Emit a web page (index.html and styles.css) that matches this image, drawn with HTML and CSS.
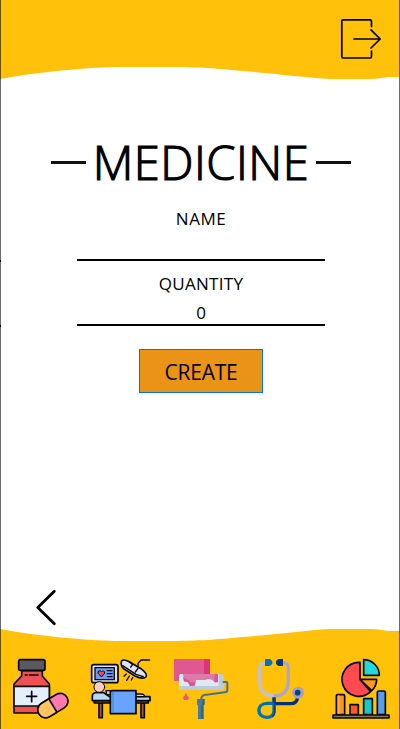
FILE: index.html
```html
<!DOCTYPE html>
<html lang="en">
<head>
<meta charset="utf-8">
<title>Medicine</title>
<link rel="stylesheet" href="styles.css">
</head>
<body>
<div class="app">
  <header class="header">
    <svg class="wave" viewBox="0 0 400 84"><path d="M0 0H400V77H388C380 78.7 372 79 362 79H330C306 77.5 270 73 243 71C222 69 205 67.3 172 67H115C80 68 38 72 0 79Z"/></svg>
    <a class="logout" aria-label="Log out"><svg viewBox="0 0 42 42"><path d="M31.5 7.5V2.2Q31.5 .8 30 .8H3.3Q1.8 .8 1.8 2.3V37.5Q1.8 39 3.3 39H30Q31.5 39 31.5 37.5V32M14 20H40M31 10.8L40.2 20L31 29"/></svg></a>
  </header>
  <main class="form">
    <h1 class="title"><span class="dash"></span><span class="title-text">MEDICINE</span><span class="dash"></span></h1>
    <label class="label name-label">NAME</label>
    <div class="field"></div>
    <label class="label quantity-label">QUANTITY</label>
    <div class="field quantity">0</div>
    <button class="create">CREATE</button>
  </main>
  <div class="back-row"><svg class="back" viewBox="0 0 22 38"><path d="M19.3 2.2L2.8 18.5L19.3 34.8"/></svg></div>
  <footer class="footer">
    <svg class="wave" viewBox="0 0 400 105"><path d="M0 5C38 12 80 16 115 17H172C205 16.7 222 15 243 13C270 11 306 6.5 330 5H362C372 5 380 5.3 388 7H400V105H0Z"/></svg>
    <nav class="nav">
      <svg viewBox="0 0 240 237">
        <g class="outlined">
          <path fill="#ee5054" d="M65 62H127V78L148 102V189H42V102L65 78Z"/>
          <rect x="56" y="29" width="79" height="32" rx="5" fill="#5a5a5e"/>
          <path fill="#e3effd" d="M42 109H148V168H42Z"/>
          <path d="M80 139H110M95 124V155M76 75H81M88 75H114"/>
          <g transform="rotate(-31 159 167)"><rect x="110" y="143" width="98" height="47" rx="23.5" fill="#ff79b0"/><path fill="#ffc360" d="M159 143H133.5A23.5 23.5 0 0 0 133.5 190H159Z"/></g>
        </g>
      </svg>
      <svg viewBox="0 0 240 237">
        <g class="outlined">
          <rect x="35" y="44" width="79" height="54" rx="6" fill="#dfdff1"/>
          <rect x="45" y="53" width="58" height="36" fill="#68a0f8" stroke-width="4"/>
          <path fill="#ff4b59" stroke-width="3" d="M64 80L54 70Q53 61 60 62L64 65Q73 59 74 68Z"/>
          <path stroke-width="4" d="M82 62H96M82 71H96M82 80H96"/>
          <path fill="#dfe3f8" d="M125 32Q132 27 148 35L183 56Q204 72 198 80Q190 90 165 78L132 57Q120 46 125 32Z"/>
          <path stroke-width="4" d="M128 47L168 73L190 80M148 36L158 44L152 51M174 55L166 66"/>
          <path stroke-width="4" d="M174 49V40L183 30H209M139 72L132 79M148 78L140 91M158 83L154 90"/>
          <path fill="#a85b49" stroke-width="5" d="M57 158H67V203H57ZM183 158H193V203H183Z"/>
          <path fill="#a85b49" d="M43 151H205V159H43Z"/>
          <path fill="#b7d8f6" d="M37 139Q36 131 45 128H71L88 140H210V152H37Z"/>
          <path fill="#ffc9b9" d="M78 122H106V134H80ZM162 132H184Q194 132 193 140H162Z" stroke-width="4"/>
          <circle cx="58" cy="111" r="16" fill="#ffcebf" stroke-width="3"/>
          <path fill="#68a3ff" d="M91 126Q91 122 96 122H168V191H91Z"/>
          <path stroke="#4389e3" d="M99 127V187" stroke-width="4"/>
        </g>
      </svg>
      <svg viewBox="0 0 240 237">
        <path fill="#df5892" d="M42 27H132V93H42Z"/><path fill="#dc3479" d="M132 27H150V76H132Z"/>
        <path fill="#dfe8ef" d="M60 72H186L190 78V116L186 120H60L57 115V77Z"/>
        <path fill="#b9cbdc" d="M57 108H176V72H186L190 78V116L186 120H60L57 115Z"/>
        <path fill="#df79aa" d="M69 72H174V96Q165 101 160 92L151 88H139V90H108L105 108H90L84 97L72 94Z"/>
        <path fill="#dc5591" d="M69 82L86 90L90 97H106L102 108H90L84 97L72 94ZM164 72H174V96H162Z"/>
        <path fill="none" stroke="#42729a" stroke-width="6" d="M188 96H199Q202 96 202 100V121Q202 126 195 127L133 135Q124 137 123 150"/>
        <path fill="#336387" d="M112 147H134V164H131V207H114V164H112Z"/><path fill="#477a9f" d="M112 147H127V164H123V207H114V164H112Z"/>
        <path fill="#df5892" d="M78 128L82 137L87 142L84 150H72L69 142L75 136Z"/>
      </svg>
      <svg viewBox="0 0 240 237">
        <g class="tube">
          <path stroke="#c4bfd2" d="M76 38Q59 39 59 55V93Q59 137 102 138"/>
          <path stroke="#aaa6c9" d="M128 38Q145 39 145 55V93Q145 137 102 138"/>
          <path stroke="#00317c" d="M102 142V161H154Q172 160 173 140"/>
          <path stroke="#0073ae" d="M101 160H82C48 160 49 202 80 202Q101 202 102 184V160"/>
          <path stroke="#00418a" d="M104 145V186Q104 195 97 200" stroke-width="5"/>
        </g>
        <path fill="#0075ad" d="M75 27H90L97 34V41L90 48H75Z"/><path fill="#003582" d="M129 27H115L108 34V41L115 48H129Z"/>
        <circle cx="174" cy="128" r="18" fill="#aaa0b7"/><circle cx="173" cy="128" r="8.5" fill="#00418a"/>
      </svg>
      <svg viewBox="0 0 240 237">
        <g class="outlined">
          <path fill="#ff4b50" d="M120 88L152 125A51 51 0 1 1 120 37Z"/>
          <path fill="#24d6de" d="M131 29A47 47 0 0 1 178 76H131Z"/>
          <path fill="#ff981e" d="M120 88H170Q170 109 155 122Z"/>
          <path fill="#ff941f" d="M49 194V138Q49 134 53 134H70Q74 134 74 138V194Z"/>
          <path stroke="#ffb241" d="M56 138V190"/>
          <path fill="#fa572b" d="M90 194V164H115V194Z"/>
          <path fill="#15c8d2" d="M131 194V146H157V194Z"/>
          <path fill="#579cf0" d="M172 194V127Q172 123 176 123H192Q196 123 196 127V194Z"/>
          <rect x="39" y="195" width="168" height="9" fill="#85736b"/>
        </g>
      </svg>
    </nav>
  </footer>
</div>
</body>
</html>
```
FILE: styles.css
```css
* { box-sizing: border-box; }
body { margin: 0; background: #fff; color: #000; font-family: "Open Sans", "Noto Sans", sans-serif; }
.app { position: relative; width: 400px; height: 729px; display: flex; flex-direction: column; overflow: hidden; }
.app::after { content: ""; position: absolute; inset: 0; border: solid rgba(0, 0, 0, .58); border-width: 0 1px; pointer-events: none; }
/* Small ticks on the window edge, level with the field underlines */
.app::before { content: ""; position: absolute; left: 0; top: 260px; width: 1px; height: 63px; border: solid #000; border-width: 2px 0; }
.header { position: relative; height: 84px; }
.wave { display: block; width: 100%; fill: #ffc10a; }
.logout { position: absolute; top: 19px; right: 18px; width: 42px; height: 42px; }
.logout svg { display: block; fill: none; stroke: #000; stroke-width: 1.7; stroke-linecap: round; stroke-linejoin: round; }
.form { height: 505px; padding: 46px 0 0 2px; display: flex; flex-direction: column; align-items: center; }
.title { display: flex; align-items: center; justify-content: space-between; width: 300px; height: 64px; margin: 0; font-size: 47px; font-weight: 400; line-height: 62px; }
.title-text { flex: 1; text-align: center; letter-spacing: .5px; white-space: nowrap; font-weight: 300; -webkit-text-stroke: 1.2px #000; }
.dash { width: 35px; height: 3px; background: #111; }
.label { height: 24px; font-size: 17px; line-height: 25px; letter-spacing: .3px; }
.name-label { margin-top: 12px; letter-spacing: .5px; }
.field { width: 248px; height: 31px; border-bottom: 2px solid #000; text-align: center; font-size: 17px; line-height: 29px; }
.quantity-label { margin-top: 10px; }
.quantity { line-height: 35px; }
.create { width: 124px; height: 44px; margin-top: 23px; padding: 2px 0 0; border: 1px solid #0078d7; background: #eb9316; color: #000; font: 400 21px/40px "Open Sans", "Noto Sans", sans-serif; letter-spacing: -.2px; }
.back-row { height: 35px; padding-left: 35px; }
.back { display: block; width: 22px; height: 38px; fill: none; stroke: #000; stroke-width: 2.8; stroke-linecap: round; stroke-linejoin: round; }
.footer { position: relative; height: 105px; }
.nav { position: absolute; left: 0; bottom: 0; display: flex; width: 400px; }
.nav svg { display: block; width: 80px; height: 79px; }
.outlined { fill: none; stroke: #080808; stroke-width: 5; stroke-linejoin: round; stroke-linecap: round; }
.tube { fill: none; stroke-width: 10; stroke-linecap: butt; stroke-linejoin: round; }
```
